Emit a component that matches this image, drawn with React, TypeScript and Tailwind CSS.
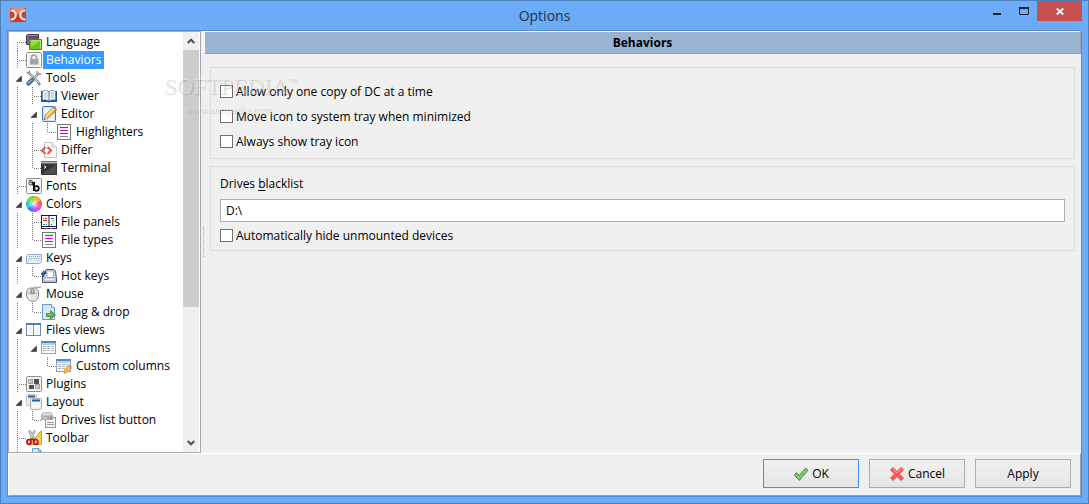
import type { ReactNode } from "react";

type Guide = "line" | "tee" | "elbow" | "open" | "first" | "blank";

interface TreeItem {
  id: string;
  label: string;
  guides: Guide[];
  selected?: boolean;
}

interface CheckOptionProps {
  id: string;
  label: string;
}

const ITEMS: TreeItem[] = [
  { id: "language", label: "Language", guides: ["first"] },
  { id: "behaviors", label: "Behaviors", guides: ["tee"], selected: true },
  { id: "tools", label: "Tools", guides: ["open"] },
  { id: "viewer", label: "Viewer", guides: ["line", "tee"] },
  { id: "editor", label: "Editor", guides: ["line", "open"] },
  { id: "list", label: "Highlighters", guides: ["line", "line", "elbow"] },
  { id: "differ", label: "Differ", guides: ["line", "tee"] },
  { id: "terminal", label: "Terminal", guides: ["line", "elbow"] },
  { id: "fonts", label: "Fonts", guides: ["tee"] },
  { id: "colors", label: "Colors", guides: ["open"] },
  { id: "panels", label: "File panels", guides: ["line", "tee"] },
  { id: "list", label: "File types", guides: ["line", "elbow"] },
  { id: "keys", label: "Keys", guides: ["open"] },
  { id: "hotkeys", label: "Hot keys", guides: ["line", "elbow"] },
  { id: "mouse", label: "Mouse", guides: ["open"] },
  { id: "drag", label: "Drag & drop", guides: ["line", "elbow"] },
  { id: "views", label: "Files views", guides: ["open"] },
  { id: "columns", label: "Columns", guides: ["line", "open"] },
  { id: "custom", label: "Custom columns", guides: ["line", "blank", "elbow"] },
  { id: "plugins", label: "Plugins", guides: ["tee"] },
  { id: "layout", label: "Layout", guides: ["open"] },
  { id: "drives", label: "Drives list button", guides: ["line", "elbow"] },
  { id: "toolbar", label: "Toolbar", guides: ["tee"] },
  { id: "doc", label: "", guides: ["tee"] },
];

const ICONS: Record<string, ReactNode> = {
  language: (
    <>
      <path d="M0.5 1.5 L1.5 0.5 H12.5 V10.5 H0.5Z" fill="#6b4a73" stroke="#4b3453" />
      <path d="M1 1.5 H12" stroke="#a586ac" />
      <path d="M1 3 H3 V10 H1Z" fill="#87668f" />
      <path d="M3.5 6.5 L4.5 5.5 H15.5 V15.5 H3.5Z" fill="#6cc913" stroke="#3e8f05" />
      <path d="M4.5 6.5 H14.5 V14.5" fill="none" stroke="#a6ee5b" />
      <path d="M5 7 H14 L5 13Z" fill="#93dd46" />
    </>
  ),
  behaviors: (
    <>
      <rect x="0.5" y="0.5" width="15" height="15" rx="1" fill="#f0f0f0" stroke="#8d8d8d" />
      <rect x="1.5" y="1.5" width="13" height="13" fill="none" stroke="#ffffff" />
      <path d="M5.5 7 V5.5 A2.5 2.5 0 0 1 10.5 5.5 V7" fill="none" stroke="#a3a3a3" strokeWidth="1.6" />
      <rect x="4" y="7" width="8.5" height="5.5" fill="#a3a3a3" />
    </>
  ),
  tools: (
    <>
      <path d="M2 2 L12 12 L14 15" fill="none" stroke="#7d8286" strokeWidth="2.4" />
      <path d="M2 2 L13 13" stroke="#e8eaeb" />
      <path d="M0.5 2 L3 3.5 L3.5 0.5" fill="none" stroke="#8d9296" strokeWidth="1.3" />
      <path d="M13 3 L6 10" stroke="#85898d" strokeWidth="2.4" />
      <path d="M13 3 L6 10" stroke="#dcdfe1" />
      <path d="M11 1 L11.5 4.5 L15 4" fill="none" stroke="#8d9296" strokeWidth="1.4" />
      <path d="M6 10 L2.5 13.5" stroke="#43658c" strokeWidth="4.2" strokeLinecap="round" />
      <path d="M6 10 L2.5 13" stroke="#92b1d2" strokeWidth="1.6" strokeLinecap="round" />
    </>
  ),
  viewer: (
    <>
      <path d="M0 3 H16 V14 H9 L8 15 L7 14 H0Z" fill="#1f5a91" />
      <path d="M1.5 3 Q5 1 8 3.5 Q11 1 14.5 3 V12 Q11 11 8 13 Q5 11 1.5 12Z" fill="#f4f8fb" stroke="#4f7fa9" strokeWidth="0.7" />
      <path d="M8 3.5 V13" stroke="#57758e" />
      <path d="M3 5 H6.5 M3 7 H6.5 M3 9 H6.5 M9.5 5 H13 M9.5 7 H13 M9.5 9 H13" stroke="#9aabb8" strokeWidth="0.8" />
    </>
  ),
  editor: (
    <>
      <rect x="1.5" y="0.5" width="13" height="15" rx="1" fill="#d4e7fa" stroke="#377bd0" />
      <rect x="3" y="2" width="10" height="12" fill="#ffffff" opacity="0.6" />
      <path d="M4 9.5 L12 1.5 L15 4.5 L7 12.5 L3 13.5Z" fill="#f2b93e" stroke="#a66d22" strokeWidth="0.8" />
      <path d="M5.5 10 L13 2.5" stroke="#fff0a1" strokeWidth="1.2" />
      <path d="M12 1.5 L13.2 0.5 L16 3.3 L15 4.5Z" fill="#cc765f" />
      <path d="M4 10 L6.7 12.6 L3 13.5Z" fill="#efd5aa" />
      <path d="M3 13.5 L3.5 12 L4.5 13Z" fill="#333333" />
    </>
  ),
  list: (
    <>
      <rect x="1.5" y="0.5" width="13" height="15" fill="#fbfbfb" stroke="#777777" />
      <path d="M4 3.5 H12" stroke="#ee1010" />
      <path d="M4 6.5 H12" stroke="#f000f0" />
      <path d="M4 9.5 H12" stroke="#138413" />
      <path d="M4 12.5 H12" stroke="#8a8a8a" />
    </>
  ),
  differ: (
    <>
      <path d="M3.5 0.5 H11 L15.5 5 V15.5 H3.5Z" fill="#f7f7f7" stroke="#c5c5c5" />
      <path d="M11 0.5 V5 H15.5" fill="#e7e7e7" stroke="#cacaca" />
      <path d="M4.5 5 L1 8.5 L4.5 12 M6.5 5 L10 8.5 L6.5 12" fill="none" stroke="#e2564e" strokeWidth="2" />
    </>
  ),
  terminal: (
    <>
      <rect x="0" y="1" width="16" height="14" fill="#343536" />
      <path d="M0 2.5 H16" stroke="#b0b2b4" strokeWidth="2" />
      <path d="M1 1.5 H2" stroke="#ff5036" />
      <path d="M3 1.5 H4" stroke="#31c83a" />
      <path d="M1 14 L15 4 V14Z" fill="#4b4d50" />
      <path d="M3 5.5 L5 7 L3 8.5" fill="none" stroke="#ffffff" />
    </>
  ),
  fonts: (
    <>
      <rect x="0.5" y="0.5" width="15" height="15" rx="1" fill="#f5f5f5" stroke="#8d8d8d" />
      <circle cx="4.5" cy="5.5" r="1.5" fill="none" stroke="#333333" />
      <path d="M2.5 3 Q6.5 1.5 6.5 4 V7.5" fill="none" stroke="#333333" />
      <path d="M8 4 V13" stroke="#111111" strokeWidth="2" />
      <circle cx="10.5" cy="10.5" r="2.3" fill="none" stroke="#111111" strokeWidth="1.7" />
    </>
  ),
  colors: (
    <>
      <path d="M8 8 L8 0 A8 8 0 0 1 14.9 4Z" fill="#ffb329" />
      <path d="M8 8 L14.9 4 A8 8 0 0 1 14.9 12Z" fill="#ff557c" />
      <path d="M8 8 L14.9 12 A8 8 0 0 1 8 16Z" fill="#d84aff" />
      <path d="M8 8 V16 A8 8 0 0 1 1.1 12Z" fill="#4b7cff" />
      <path d="M8 8 L1.1 12 A8 8 0 0 1 1.1 4Z" fill="#19dfe6" />
      <path d="M8 8 L1.1 4 A8 8 0 0 1 8 0Z" fill="#62ed38" />
      <circle cx="8" cy="8" r="4.5" fill="#ffffff" opacity="0.3" />
      <circle cx="8" cy="8" r="2.3" fill="#ffffff" opacity="0.55" />
      <circle cx="8" cy="8" r="7.5" fill="none" stroke="#777777" strokeWidth="0.6" opacity="0.6" />
    </>
  ),
  panels: (
    <>
      <rect x="0.5" y="1.5" width="15" height="13" fill="#ffffff" stroke="#15153b" />
      <path d="M1 1.5 H15 M8 1 V12 M1 12.5 H15" stroke="#15153b" />
      <path d="M2 4.5 H3 M4 4.5 H6 M2 6.5 H6" stroke="#ef1717" />
      <path d="M2 10.5 H4" stroke="#00c500" />
      <path d="M5 10.5 H6" stroke="#174dff" />
      <path d="M10 4.5 H13 M10 10.5 H11" stroke="#174dff" />
      <path d="M11 6.5 H13" stroke="#00dcdc" />
      <path d="M11 8.5 H13" stroke="#efe000" />
      <path d="M5 14 H6 M9 14 H11" stroke="#ffffff" />
    </>
  ),
  keys: (
    <>
      <path d="M1.5 4.5 H15.5 V11.5 L13.5 13.5 H0.5 V5.5Z" fill="#e4eef9" stroke="#8eadd0" />
      <path d="M3 6.5 H14 M2.5 8.5 H14 M2 10.5 H4 M5 10.5 H11 M12 10.5 H13" stroke="#8ba5c1" strokeDasharray="1 1" />
      <path d="M5 11 H11" stroke="#ffffff" />
    </>
  ),
  hotkeys: (
    <>
      <path d="M5 1.5 H13 L14.5 3 L15.5 11 V14.5 H1.5 V7 L4 5Z" fill="#d4d8df" stroke="#40557f" />
      <path d="M6 3 H12.5 V9.5 H6Z" fill="#fafafa" stroke="#adb4bf" />
      <path d="M3 10 H14 V13 H3Z" fill="#f4f4f4" stroke="#8390a5" strokeWidth="0.7" />
      <path d="M0 6 L3 2.5 V4 H5 V6 H3 V9Z" fill="#305eb4" stroke="#173777" strokeWidth="0.5" />
    </>
  ),
  mouse: (
    <>
      <path d="M8 3 C8 -1 12 3 15.5 0.5" fill="none" stroke="#858585" />
      <path d="M0.5 6 Q0.5 2.5 4 2 H9 Q12.5 2.5 12.5 6 V10 Q11.5 15 7 15.5 Q2 15 0.5 10Z" fill="#e4e4e4" stroke="#909090" />
      <path d="M2 7 Q6.5 8.5 11 7" fill="none" stroke="#ababab" />
      <rect x="5" y="3" width="3" height="4.5" rx="1.5" fill="#d5d5d5" stroke="#6b6b6b" />
      <path d="M3 9 Q3 12 5 13.5" fill="none" stroke="#ffffff" strokeWidth="1.5" />
    </>
  ),
  drag: (
    <>
      <path d="M1.5 0.5 H10.5 L13.5 3.5 V15.5 H1.5Z" fill="#d4e6f8" stroke="#6798cc" />
      <path d="M10.5 0.5 V3.5 H13.5" fill="#ffffff" stroke="#77a5d2" />
      <path d="M3 12 L11 5 V13Z" fill="#ffffff" opacity="0.5" />
      <path d="M5.5 9.5 H9.5 V6.5 L14.5 11 L9.5 15 V12.5 H5.5Z" fill="#62ab45" stroke="#4b8d37" />
      <path d="M6.5 10.5 H10.5" stroke="#a1d987" />
    </>
  ),
  views: (
    <>
      <rect x="0.5" y="1.5" width="14" height="12" fill="#ffffff" stroke="#678cb8" />
      <path d="M0 2 H15" stroke="#477fc4" strokeWidth="2" />
      <path d="M7.5 3 V13" stroke="#7193ba" />
      <path d="M2 5 H6 V12 H2Z M9 5 H13 V12 H9Z" fill="#f1f6fc" />
    </>
  ),
  columns: (
    <>
      <rect x="0.5" y="1.5" width="14" height="12" fill="#fafafa" stroke="#8ba6c6" />
      <path d="M0 2 H15" stroke="#5688c8" strokeWidth="2" />
      <path d="M1 4 H14" stroke="#b5d0f0" strokeWidth="2" />
      <path d="M2 6.5 H13 M2 8.5 H13 M2 10.5 H13" stroke="#b1b5ba" strokeDasharray="3 1" />
    </>
  ),
  custom: (
    <>
      <rect x="0.5" y="1.5" width="14" height="12" fill="#fafafa" stroke="#8ba6c6" />
      <path d="M0 2 H15" stroke="#5688c8" strokeWidth="2" />
      <path d="M1 4 H14" stroke="#b5d0f0" strokeWidth="2" />
      <path d="M2 6.5 H13 M2 8.5 H13 M2 10.5 H13" stroke="#b1b5ba" strokeDasharray="3 1" />
      <path d="M8.5 12 L13 7.5 L15.5 10 L11 14.5 L8 15.5Z" fill="#f3bd4c" stroke="#bd8a50" strokeWidth="0.7" />
      <path d="M13 7.5 L14 6.5 L16 9 L15 10Z" fill="#d97870" />
    </>
  ),
  plugins: (
    <>
      <rect x="0.5" y="0.5" width="15" height="15" rx="1" fill="#f5f5f5" stroke="#8d8d8d" />
      <rect x="2.5" y="3.5" width="4" height="4" fill="#c9c9c9" stroke="#a2a2a2" />
      <rect x="8" y="3" width="5" height="5" fill="#505050" />
      <rect x="3" y="9" width="5" height="4" fill="#505050" />
      <rect x="9.5" y="8.5" width="4" height="4" fill="#c9c9c9" stroke="#a2a2a2" />
    </>
  ),
  layout: (
    <>
      <rect x="0.5" y="0.5" width="10" height="11" rx="1" fill="#ededed" stroke="#c3c3c3" />
      <path d="M2 2.5 H9" stroke="#275f99" strokeWidth="2" />
      <rect x="4.5" y="4.5" width="11" height="11" rx="1" fill="#ededed" stroke="#adadad" />
      <path d="M6 6.5 H14" stroke="#275f99" strokeWidth="2" />
      <path d="M6 8 H14 V14 H6Z" fill="#f7f7f7" />
    </>
  ),
  drives: (
    <>
      <rect x="4.5" y="5.5" width="10" height="10" fill="#f6f6f6" stroke="#7f9dc1" />
      <path d="M6 10.5 H13 M6 12.5 H13" stroke="#9b9b9b" />
      <path d="M2 0 H10 L12 3 V8 H0 V3Z" fill="#a9a9a9" />
      <path d="M2 0.5 H10 L11 3.5 H1Z" fill="#dadada" />
      <path d="M1 6 H6" stroke="#e5e5e5" />
      <path d="M9 6 H11" stroke="#707070" />
    </>
  ),
  toolbar: (
    <>
      <path d="M15.5 0.5 V14.5 H4Z" fill="#f3ce3c" stroke="#cda03d" />
      <path d="M13 7 V12 H9Z" fill="#fff7d4" />
      <path d="M3 0.5 L9 10 M9 0.5 L4 10" stroke="#8b8b8b" strokeWidth="2.4" />
      <path d="M3 0.5 L9 10 M9 0.5 L4 10" stroke="#e8e8e8" />
      <ellipse cx="3" cy="12" rx="2" ry="2.4" fill="#f7dada" stroke="#ca1616" strokeWidth="1.9" />
      <ellipse cx="9.8" cy="12" rx="2" ry="2.4" fill="#f7dada" stroke="#ca1616" strokeWidth="1.9" />
      <path d="M4.5 9.5 H8.5" stroke="#b51010" strokeWidth="1.8" />
    </>
  ),
  doc: (
    <>
      <path d="M6.5 0.5 H13 L15.5 3.5 V15.5 H6.5Z" fill="#d5e8fb" stroke="#6ca2da" />
      <path d="M12.5 1 V3.5 H15" fill="none" stroke="#6ca2da" />
    </>
  ),
};

// dotted branch lines in the same 15px step that indents the children
const GUIDES: Record<Guide, ReactNode> = {
  line: <path d="M6.5 0 V18" />,
  tee: <path d="M6.5 0 V18 M8 9.5 H15" />,
  elbow: <path d="M6.5 0 V10 M8 9.5 H15" />,
  first: <path d="M6.5 9 V18 M8 9.5 H15" />,
  open: <path d="M10.5 7 V12.5 H5Z" fill="#404040" stroke="#333333" strokeWidth="0.6" strokeDasharray="none" />,
  blank: null,
};

function TreeRow({ item }: { item: TreeItem }) {
  return (
    <li className="flex h-[18px] shrink-0 items-center">
      {item.guides.map((guide, i) => (
        <svg key={i} className="h-[18px] w-[15px] shrink-0" viewBox="0 0 15 18" fill="none" stroke="#777777" strokeDasharray="1 1">
          {GUIDES[guide]}
        </svg>
      ))}
      <svg className="size-4 shrink-0" viewBox="0 0 16 16">{ICONS[item.id]}</svg>
      {item.label && (
        <button
          type="button"
          className={item.selected
            ? "ml-px h-[18px] bg-[#3399ff] px-[3px] leading-[18px] whitespace-nowrap text-white"
            : "ml-px h-[18px] px-[3px] leading-[18px] whitespace-nowrap"}
        >
          {item.label}
        </button>
      )}
    </li>
  );
}

function ScrollBar() {
  return (
    <div className="flex w-4 shrink-0 flex-col bg-[#f0f0f0]">
      <button type="button" aria-label="Scroll up" className="flex h-[18px] items-center justify-center">
        <svg className="h-[6px] w-2" viewBox="0 0 8 6" fill="none" stroke="#505050" strokeWidth="2">
          <path d="M0.7 5 L4 1.7 L7.3 5" />
        </svg>
      </button>
      <div className="flex-1">
        <div className="h-[67%] bg-[#cdcdcd]" />
      </div>
      <button type="button" aria-label="Scroll down" className="flex h-[18px] items-center justify-center">
        <svg className="h-[6px] w-2" viewBox="0 0 8 6" fill="none" stroke="#505050" strokeWidth="2">
          <path d="M0.7 1 L4 4.3 L7.3 1" />
        </svg>
      </button>
    </div>
  );
}

function CheckOption({ id, label }: CheckOptionProps) {
  return (
    <div className="flex h-[17px] items-center gap-[3px]">
      <input id={id} type="checkbox" className="size-[13px] shrink-0 appearance-none border border-[#707070] bg-white checked:bg-[#3399ff]" />
      <label htmlFor={id}>{label}</label>
    </div>
  );
}

function TitleBar() {
  return (
    <header className="grid h-[29px] shrink-0 grid-cols-[1fr_auto_1fr] items-start">
      <svg className="mt-[6px] ml-[3px] size-4" viewBox="0 0 16 16">
        <rect y="1" width="16" height="14" rx="1" fill="#c8412c" />
        <path d="M1 1 H15 L8 8Z" fill="#e58a77" />
        <path d="M1 15 H15 L8 9Z" fill="#d3351d" />
        <path d="M0.5 3.5 C7.5 3 7.5 13 0.5 12.5 M15.5 3.5 C8.5 3 8.5 13 15.5 12.5" fill="none" stroke="#ece6e6" strokeWidth="2.2" />
      </svg>
      <h1 className="self-center text-[14px] leading-5 text-[#1d3045]">Options</h1>
      <div className="flex h-5 justify-end">
        <button type="button" aria-label="Minimize" className="w-[27px]">
          <svg className="h-5 w-[27px]" viewBox="0 0 27 20"><path d="M10 12 H18 V14 H10Z" fill="#222222" /></svg>
        </button>
        <button type="button" aria-label="Maximize" className="w-[27px]">
          <svg className="h-5 w-[27px]" viewBox="0 0 27 20">
            <path d="M9.5 6.5 H18.5 V13.5 H9.5Z" fill="none" stroke="#222222" />
            <path d="M9 7 H19" stroke="#222222" strokeWidth="2" />
          </svg>
        </button>
        <button type="button" aria-label="Close" className="flex w-[45px] items-center justify-center bg-[#c75050]">
          <svg className="h-[7px] w-2" viewBox="0 0 8 7"><path d="M0.7 0.5 L7.3 6.5 M7.3 0.5 L0.7 6.5" stroke="#ffffff" strokeWidth="1.8" /></svg>
        </button>
      </div>
    </header>
  );
}

function Watermark() {
  return (
    <div className="pointer-events-none absolute top-[44px] left-[156px] font-['Liberation_Serif',serif] text-white/40 [text-shadow:1px_1px_1px_rgb(0_0_0/0.16)]">
      <div className="flex items-start text-[23px] leading-6">
        SOFTPEDIA<span className="text-[9px] leading-3">™</span>
      </div>
      <div className="pl-5 text-[11px] leading-5">www.softpedia.com</div>
    </div>
  );
}

export default function App() {
  return (
    <div className="flex h-screen min-h-80 flex-col border border-[#4c80b9] bg-[#6babf7] px-[6px] pb-[6px] font-['Open_Sans','Noto_Sans',sans-serif] text-[12px] leading-4 text-black">
      <TitleBar />
      <main className="relative flex min-h-0 flex-1 flex-col border border-[#5790d0] bg-[#f0f0f0]">
        <div className="flex min-h-0 flex-1">
          <nav aria-label="Option pages" className="flex w-[193px] shrink-0 border border-[#a5a8b2] bg-white pr-px">
            <ul className="flex min-w-0 flex-1 flex-col overflow-hidden pt-px pl-[2px]">
              {ITEMS.map((item, i) => (
                <TreeRow key={i} item={item} />
              ))}
            </ul>
            <ScrollBar />
          </nav>
          <div className="flex w-[3px] shrink-0 items-center justify-end">
            <div className="h-[30px] border-l border-dotted border-[#a8a8a8]" />
          </div>
          <section className="min-w-0 flex-1">
            <h2 className="h-[23px] border border-t-white border-r-[#a0a0a0] border-b-[#a0a0a0] border-l-white bg-[#99b4d1] text-center leading-[21px] font-bold">
              Behaviors
            </h2>
            <div className="flex flex-col gap-[7px] px-[6px] pt-[13px]">
              <div className="flex flex-col gap-2 border border-[#dcdcdc] px-[9px] pt-[15px] pb-2">
                <CheckOption id="one-copy" label="Allow only one copy of DC at a time" />
                <CheckOption id="move-tray" label="Move icon to system tray when minimized" />
                <CheckOption id="show-tray" label="Always show tray icon" />
              </div>
              <div className="flex flex-col border border-[#dcdcdc] px-[9px] pt-[9px] pb-[6px]">
                <label htmlFor="blacklist" className="mb-[7px]">Drives <u className="underline-offset-2">b</u>lacklist</label>
                <input id="blacklist" type="text" defaultValue="D:\" className="mb-[5px] h-[23px] w-full border border-[#abadb3] bg-white px-[5px] outline-none" />
                <CheckOption id="hide-devices" label="Automatically hide unmounted devices" />
              </div>
            </div>
          </section>
        </div>
        <footer className="flex h-[43px] shrink-0 justify-end gap-[10px] border border-t-white border-r-[#a0a0a0] border-b-[#a0a0a0] border-l-white px-[9px] pt-[5px]">
          <button type="button" className="flex h-[29px] w-24 items-center justify-center gap-[3px] border border-[#3399ff] bg-linear-to-b from-[#f0f0f0] to-[#e5e5e5]">
            <svg className="size-4" viewBox="0 0 16 16">
              <path d="M1 9 L3.5 6.5 L6 9.5 L12.5 2 L15 4 L6.5 14.5Z" fill="#6fba59" stroke="#5a9c52" />
              <path d="M2.5 8.5 L6 12 L13 4" fill="none" stroke="#9ad187" />
            </svg>
            OK
          </button>
          <button type="button" className="flex h-[29px] w-24 items-center justify-center gap-[3px] border border-[#acacac] bg-linear-to-b from-[#f0f0f0] to-[#e5e5e5]">
            <svg className="size-4" viewBox="0 0 16 16">
              <path d="M4 1.5 L8 5.5 L12 1.5 L14.5 4 L10.5 8 L14.5 12 L12 14.5 L8 10.5 L4 14.5 L1.5 12 L5.5 8 L1.5 4Z" fill="#f95a59" stroke="#e05a5b" />
              <path d="M4 3 L8 7 L12 3" fill="none" stroke="#ff9a91" />
            </svg>
            Cancel
          </button>
          <button type="button" className="h-[29px] w-24 border border-[#acacac] bg-linear-to-b from-[#f0f0f0] to-[#e5e5e5]">Apply</button>
        </footer>
        <Watermark />
      </main>
    </div>
  );
}
